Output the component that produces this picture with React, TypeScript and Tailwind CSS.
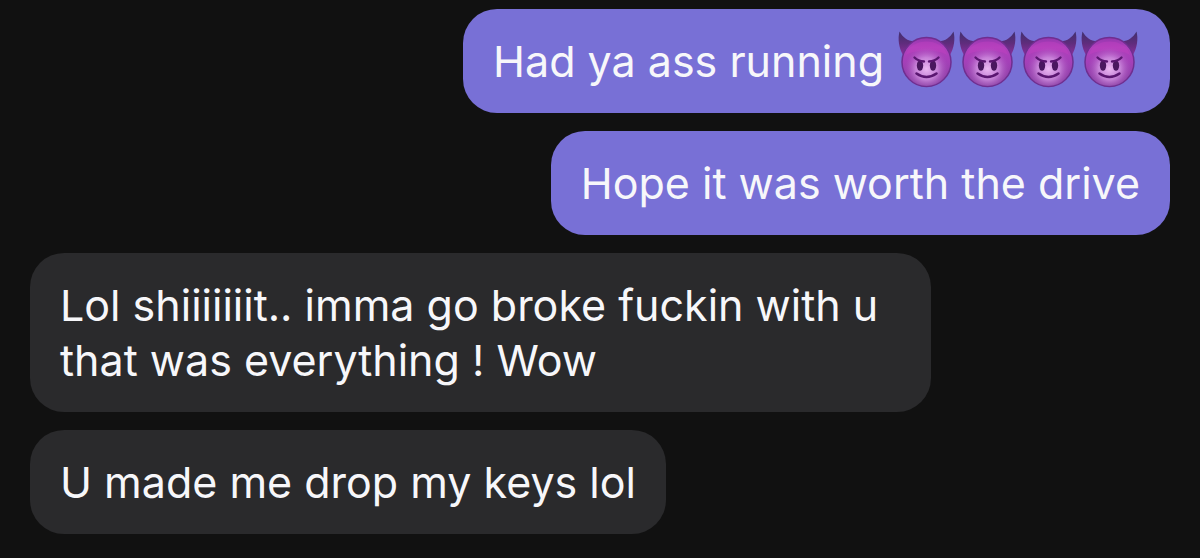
import type { ReactNode } from "react";

function DevilEmoji() {
  return (
    <svg viewBox="0 0 61 60" className="h-[60px] w-[61px] shrink-0" aria-hidden="true">
      <defs>
        <linearGradient id="devil-face" x1="0" y1="0" x2="0" y2="1">
          <stop offset="0" stopColor="#9436ae" />
          <stop offset="0.2" stopColor="#b040bc" />
          <stop offset="0.5" stopColor="#a440b8" />
          <stop offset="1" stopColor="#84409f" />
        </linearGradient>
        <radialGradient id="devil-glow" cx="0.5" cy="0.64" r="0.46">
          <stop offset="0" stopColor="#ebb8f2" stopOpacity="1" />
          <stop offset="0.5" stopColor="#d090e0" stopOpacity="0.8" />
          <stop offset="1" stopColor="#a850bc" stopOpacity="0" />
        </radialGradient>
        <linearGradient id="devil-horn" x1="0" y1="0" x2="0" y2="1">
          <stop offset="0" stopColor="#40306e" />
          <stop offset="0.5" stopColor="#5f2c7c" />
          <stop offset="1" stopColor="#8a2f9c" />
        </linearGradient>
      </defs>
      <path d="M3.5 1.5C1.500 9 3 18 7 25L20 11C13 12 7 8 3.500 1.500Z" fill="url(#devil-horn)" />
      <path d="M57.5 1.5C59.500 9 58 18 54 25L41 11C48 12 54 8 57.500 1.500Z" fill="url(#devil-horn)" />
      <circle cx="30.5" cy="32" r="24.5" fill="url(#devil-face)" stroke="#6f2e90" strokeWidth="1.5" />
      <path d="M10 25C14 7 47 7 51 25C42 19 19 19 10 25Z" fill="#bd3fc0" opacity="0.5" />
      <circle cx="30.5" cy="32" r="24" fill="url(#devil-glow)" />
      <ellipse cx="24" cy="35.5" rx="3.2" ry="5.2" fill="#4a175f" />
      <ellipse cx="37" cy="35.5" rx="3.2" ry="5.2" fill="#4a175f" />
      <path d="M18.5 27.5Q22 31 28 31.5M42.5 27.5Q39 31 33 31.5" fill="none" stroke="#5a1670" strokeWidth="2.4" strokeLinecap="round" />
      <path d="M20.5 43.5Q30.5 50.5 40.5 43.5" fill="none" stroke="#5a1670" strokeWidth="2.6" strokeLinecap="round" />
    </svg>
  );
}

function Message({ sent = false, children }: { sent?: boolean; children: ReactNode }) {
  return (
    <li
      className={
        sent
          ? "max-w-[79%] self-end rounded-[34px] bg-[#7870d6] px-[30px] pt-[25px] pb-6"
          : "max-w-[79%] self-start rounded-[34px] bg-[#2a2a2c] px-[30px] pt-[25px] pb-6"
      }
    >
      {children}
    </li>
  );
}

export default function App() {
  return (
    <main className="min-h-screen bg-[#111111] px-[30px] py-[9px] font-['Inter',sans-serif] text-[43px] leading-[55px] text-[#f7f7fa]">
      <ul className="flex flex-col gap-[18px]">
        <Message sent>
          <div className="flex items-start gap-3">
            <p>Had ya ass running</p>
            <span role="img" aria-label="Four smiling devils" className="-my-1 flex">
              <DevilEmoji />
              <DevilEmoji />
              <DevilEmoji />
              <DevilEmoji />
            </span>
          </div>
        </Message>
        <Message sent>
          <p>Hope it was worth the drive</p>
        </Message>
        <Message>
          <p>Lol shiiiiiiit.. imma go broke fuckin with u that was everything ! Wow</p>
        </Message>
        <Message>
          <p>U made me drop my keys lol</p>
        </Message>
      </ul>
    </main>
  );
}
